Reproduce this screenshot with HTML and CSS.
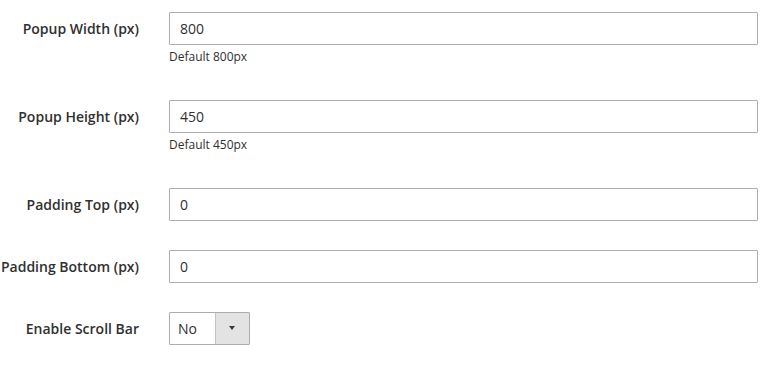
FILE: index.html
```html
<!DOCTYPE html>
<html lang="en">
<head>
  <meta charset="UTF-8">
  <meta name="viewport" content="width=device-width, initial-scale=1.0">
  <title>Popup Settings</title>
  <link rel="stylesheet" href="styles.css">
</head>
<body>
  <form class="config">
    <div class="field">
      <label for="popup-width">Popup Width (px)</label>
      <div class="control">
        <input type="text" id="popup-width" value="800">
        <div class="note">Default 800px</div>
      </div>
    </div>

    <div class="field">
      <label for="popup-height">Popup Height (px)</label>
      <div class="control">
        <input type="text" id="popup-height" value="450">
        <div class="note">Default 450px</div>
      </div>
    </div>

    <div class="field">
      <label for="padding-top">Padding Top (px)</label>
      <div class="control">
        <input type="text" id="padding-top" value="0">
      </div>
    </div>

    <div class="field">
      <label for="padding-bottom">Padding Bottom (px)</label>
      <div class="control">
        <input type="text" id="padding-bottom" value="0">
      </div>
    </div>

    <div class="field">
      <label for="scroll-bar">Enable Scroll Bar</label>
      <div class="control">
        <div class="select-wrap">
          <select id="scroll-bar">
            <option>No</option>
            <option>Yes</option>
          </select>
        </div>
      </div>
    </div>
  </form>
</body>
</html>
```

FILE: styles.css
```css
body {
  margin: 0;
  padding: 12px 12px 0 0;
  background-color: #ffffff;
  font-family: "Open Sans", Arial, sans-serif;
  color: #303030;
}
.config {
  display: flex;
  flex-direction: column;
  gap: 29px;
}
.field {
  display: grid;
  grid-template-columns: 139px 1fr;
  column-gap: 30px;
  align-items: start;
}
.field label {
  font-size: 14px;
  font-weight: 600;
  line-height: 33px;
  text-align: right;
  white-space: nowrap;
}
.control input {
  box-sizing: border-box;
  display: block;
  width: 100%;
  height: 33px;
  margin: 0;
  padding: 0 10px;
  font-family: inherit;
  font-size: 14px;
  color: #303030;
  border: 1px solid #adadad;
  border-radius: 1px;
  outline: none;
}
/* small hint under an input */
.note {
  margin: 3px 0 5px;
  font-size: 12px;
  line-height: 18px;
}
.select-wrap {
  position: relative;
  width: 81px;
}
.select-wrap select {
  box-sizing: border-box;
  display: block;
  width: 81px;
  height: 33px;
  margin: 0;
  padding: 0 0 0 8px;
  font-family: inherit;
  font-size: 14px;
  color: #303030;
  border: 1px solid #adadad;
  border-radius: 1px;
  appearance: none;
  -webkit-appearance: none;
  background: linear-gradient(to right, #ffffff 0 45px, #c2c2c2 45px 46px, #e3e3e3 46px);
  outline: none;
}
.select-wrap::after {
  content: "";
  position: absolute;
  top: 14px;
  left: 60px;
  border-left: 3.5px solid transparent;
  border-right: 3.5px solid transparent;
  border-top: 4px solid #41362f;
  pointer-events: none;
}
```
